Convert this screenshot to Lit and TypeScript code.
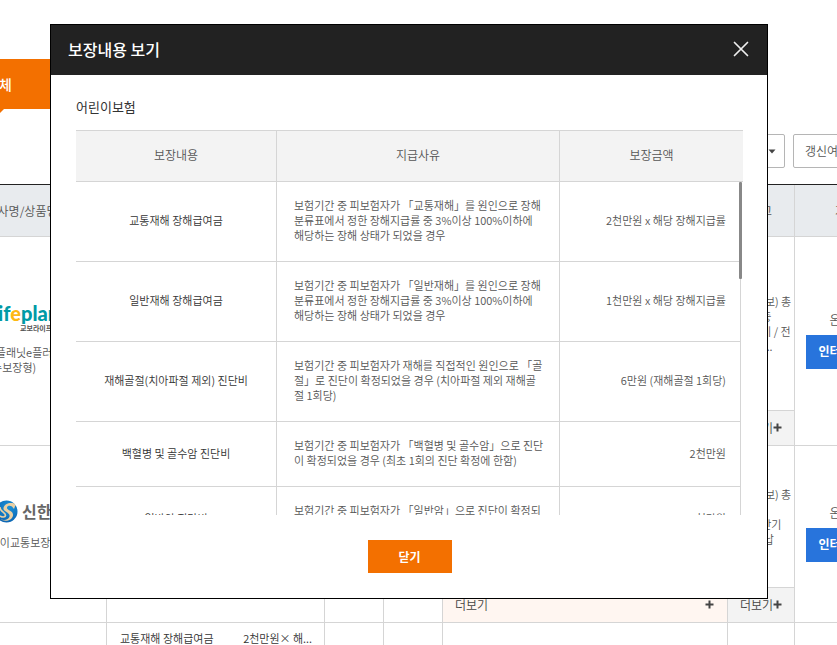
import { LitElement, html, css, svg } from "lit";
import { customElement, property } from "lit/decorators.js";

const base = css`
  *, *::before, *::after { box-sizing: border-box; }
  button, select { font: inherit; margin: 0; }
  h2, h3, p { margin: 0; }
  table { border-collapse: separate; border-spacing: 0; table-layout: fixed; width: 100%; }
  th, td { padding: 0; font-weight: inherit; }
`;

const plus = html`<svg class="plus" width="9" height="9" viewBox="0 0 9 9" aria-hidden="true">
  <path d="M4.5 0.5V8.5M0.5 4.5H8.5" stroke="#444" stroke-width="2" fill="none" />
</svg>`;

const lines = (rows: string[]) => rows.map((r, i) => (i ? html`<br />${r}` : r));

interface Benefit { name: string; reason: string[]; amount: string; }

const BENEFITS: Benefit[] = [
  {
    name: "교통재해 장해급여금",
    reason: ["보험기간 중 피보험자가 「교통재해」를 원인으로 장해", "분류표에서 정한 장해지급률 중 3%이상 100%이하에", "해당하는 장해 상태가 되었을 경우"],
    amount: "2천만원 x 해당 장해지급률",
  },
  {
    name: "일반재해 장해급여금",
    reason: ["보험기간 중 피보험자가 「일반재해」를 원인으로 장해", "분류표에서 정한 장해지급률 중 3%이상 100%이하에", "해당하는 장해 상태가 되었을 경우"],
    amount: "1천만원 x 해당 장해지급률",
  },
  {
    name: "재해골절(치아파절 제외) 진단비",
    reason: ["보험기간 중 피보험자가 재해를 직접적인 원인으로 「골", "절」로 진단이 확정되었을 경우 (치아파절 제외 재해골", "절 1회당)"],
    amount: "6만원 (재해골절 1회당)",
  },
  {
    name: "백혈병 및 골수암 진단비",
    reason: ["보험기간 중 피보험자가 「백혈병 및 골수암」으로 진단", "이 확정되었을 경우 (최초 1회의 진단 확정에 한함)"],
    amount: "2천만원",
  },
  {
    name: "일반암 진단비",
    reason: ["보험기간 중 피보험자가 「일반암」으로 진단이 확정되", "었을 경우 (최초 1회한)"],
    amount: "1천만원",
  },
];

@customElement("benefit-dialog")
export class BenefitDialog extends LitElement {
  static styles = [base, css`
    :host { display: block; background: #fff; border: 1px solid #000; }
    .bar { display: flex; align-items: center; justify-content: space-between; height: 50px; padding: 0 17px 2px; background: #222; color: #fff; }
    .title { font-size: 16px; line-height: 24px; font-weight: 500; }
    .close { display: flex; padding: 0; border: 0; background: none; cursor: pointer; }
    .content { padding: 22px 24px 25px 25px; }
    .product { margin-bottom: 13px; font-size: 13px; line-height: 20px; font-weight: 400; color: #333; }
    .name { width: 201px; }
    .reason { width: 283px; }
    .head th { height: 52px; padding-bottom: 3px; background: #f3f3f3; border: solid #d5d5d5; border-width: 1px 1px 1px 0; color: #555; }
    .head th:last-child { border-right: 0; }
    .scroller { position: relative; height: 333px; padding-right: 2px; overflow: hidden; }
    .list td { padding: 16px 8px 18px 17px; font-size: 11px; line-height: 15px; border: solid #d5d5d5; border-width: 0 1px 1px 0; color: #555; white-space: nowrap; }
    .list td.name { padding: 16px 0 18px; text-align: center; color: #333; }
    .list td.amount { padding: 16px 14px 18px 0; text-align: right; }
    .thumb { position: absolute; top: 0; right: 1px; width: 3px; height: 97px; border-radius: 1px; background: #888; }
    .confirm { display: block; width: 84px; height: 33px; margin: 25px auto 0; padding: 0; border: 0; background: #f37000; color: #fff; font-weight: 700; cursor: pointer; }
  `];

  render() {
    const cols = html`<colgroup><col class="name" /><col class="reason" /><col /></colgroup>`;
    return html`
      <header class="bar">
        <h2 class="title">보장내용 보기</h2>
        <button class="close" type="button" aria-label="닫기">
          <svg width="18" height="18" viewBox="0 0 18 18"><path d="M2.5 2.5L15.5 15.5M15.5 2.5L2.5 15.5" stroke="#eee" stroke-width="1.7" stroke-linecap="round" /></svg>
        </button>
      </header>
      <div class="content">
        <h3 class="product">어린이보험</h3>
        <table class="head">
          ${cols}
          <thead><tr><th scope="col">보장내용</th><th scope="col">지급사유</th><th scope="col">보장금액</th></tr></thead>
        </table>
        <div class="scroller">
          <table class="list" aria-label="어린이보험 보장내용">
            ${cols}
            <tbody>
              ${BENEFITS.map((b) => html`<tr><td class="name">${b.name}</td><td>${lines(b.reason)}</td><td class="amount">${b.amount}</td></tr>`)}
            </tbody>
          </table>
          <span class="thumb"></span>
        </div>
        <button class="confirm" type="button">닫기</button>
      </div>`;
  }
}

@customElement("filter-select")
export class FilterSelect extends LitElement {
  @property() label = "";
  static styles = [base, css`
    :host { display: grid; width: 105px; height: 34px; }
    select, .arrow { grid-area: 1 / 1; }
    select { appearance: none; width: 100%; height: 100%; padding: 0 24px 2px 11px; border: 1px solid #b5b5b5; border-radius: 2px; background: #fff; color: #555; }
    .arrow { place-self: center end; margin-right: 9px; pointer-events: none; }
  `];
  render() {
    return html`<select aria-label=${this.label}><option>${this.label}</option></select>
      <svg class="arrow" width="8" height="5" viewBox="0 0 8 5"><path d="M0.5 0.5H7.5L4 4.5Z" fill="#444" /></svg>`;
  }
}

const lifeplanet = html`
  <div class="lifeplanet"><span class="word">lif<span class="accent">e</span>planet</span><span class="caption">교보라이프플래닛</span></div>`;

const shinhan = html`
  <div class="shinhan">
    <svg width="23" height="23" viewBox="0 0 23 23" aria-hidden="true">
      <defs><radialGradient id="globe" cx="0.6" cy="0.3" r="0.8">
        ${svg`<stop offset="0" stop-color="#1c93d8" /><stop offset="1" stop-color="#0a5fae" />`}
      </radialGradient></defs>
      <circle cx="11.5" cy="11.5" r="11" fill="url(#globe)" />
      <path d="M19 3.5C15 2 9 4 8.500 8C8 12 15.500 12 14.500 16.500C13.800 19.500 9 21 5.500 19C8.500 21.800 17 21.500 18 15.500C18.800 10.500 11.500 10.500 12 7.500C12.300 5.500 15 5.200 17 6.500L19 9L20.500 5Z" fill="#ead0a4" />
      <path d="M5 7C4.500 11.500 11 12.500 10.500 15.500C10.200 17.300 7.500 17.500 5 16" stroke="#ead0a4" stroke-width="1.600" fill="none" />
    </svg>
    <span class="mark">신한라이프</span>
  </div>`;

@customElement("app-root")
export class AppRoot extends LitElement {
  static styles = [base, css`
    :host { display: block; position: relative; height: 100vh; overflow: hidden; background: #fff; color: #555; font: 350 12px/15px "Noto Sans CJK KR", "Noto Sans", sans-serif; }
    .page { min-width: 960px; margin-left: -62px; padding-top: 59px; }
    .tabs { display: flex; }
    .tab { position: relative; width: 122px; height: 50px; padding: 0; border: 0; background: #f37000; color: #fff; font-size: 14px; font-weight: 500; }
    .tab::after { content: ""; position: absolute; top: 100%; left: 50%; margin-left: -5px; border: solid transparent; border-width: 5px 5px 0; border-top-color: #f37000; }
    .filters { display: flex; justify-content: flex-end; gap: 8px; margin: 25px 0 16px; }
    .products { width: 960px; border-top: 1px solid #222; }
    .products th { height: 52px; background: #e8ebee; }
    .products th, .products td { border: solid #d5d5d5; border-width: 0 1px 1px 0; }
    .c1 { width: 169px; } .c2 { width: 218px; } .c3 { width: 59px; } .c5 { width: 285px; } .c6 { width: 67px; } .c7 { width: 103px; }
    .cell { display: flex; flex-direction: column; justify-content: center; min-height: 208px; }
    .short .cell { min-height: 176px; }
    .company { gap: 12px; padding: 0 0 4px 10px; font-size: 11px; white-space: nowrap; }
    .note { flex: 1; display: flex; align-items: center; padding-left: 13px; font-size: 11px; white-space: nowrap; }
    .more { display: flex; align-items: center; justify-content: space-between; width: 100%; height: 35px; padding: 0 13px 2px 12px; border: 0; border-top: 1px solid #d5d5d5; background: #f3f3f3; color: #444; text-align: left; white-space: nowrap; }
    .more.wide { background: #fff6f1; }
    .plus { flex: none; }
    .apply { align-items: center; gap: 8px; padding-bottom: 2px; }
    .join { width: 80px; height: 34px; padding: 0 0 2px; border: 0; background: #2874dc; color: #fff; font-weight: 700; }
    .summary { display: flex; justify-content: space-between; padding: 8px 12px 24px 13px; font-size: 11px; color: #333; white-space: nowrap; }
    .lifeplanet { display: flex; flex-direction: column; width: 130px; padding-left: 45px; }
    .word { font: 900 20px/20px Lato, sans-serif; color: #009aa6; }
    .accent { color: #fdb913; }
    .caption { padding-left: 27px; font-size: 7px; line-height: 10px; font-weight: 700; color: #555; white-space: nowrap; }
    .shinhan { display: flex; align-items: center; gap: 4px; padding-left: 47px; white-space: nowrap; }
    .mark { font-size: 16px; line-height: 20px; font-weight: 700; color: #666; }
    .dialog { position: absolute; top: 24px; left: 50px; right: 69px; }
  `];

  private row(short: boolean, logo: unknown, name: string[], note: string[]) {
    return html`<tr class=${short ? "short" : ""}>
      <td><div class="cell company">${logo}<p>${lines(name)}</p></div></td>
      <td></td><td></td><td></td>
      <td><div class="cell"><div class="note"></div><button class="more wide" type="button">더보기${plus}</button></div></td>
      <td><div class="cell"><p class="note"><span>${lines(note)}</span></p><button class="more" type="button">더보기${plus}</button></div></td>
      <td><div class="cell apply"><span>온라인</span><button class="join" type="button">인터넷가입</button></div></td>
    </tr>`;
  }

  render() {
    return html`
      <main class="page">
        <nav class="tabs"><button class="tab" type="button">전체</button></nav>
        <div class="filters"><filter-select label="보험기간"></filter-select><filter-select label="갱신여부"></filter-select></div>
        <table class="products">
          <colgroup><col class="c1" /><col class="c2" /><col class="c3" /><col class="c3" /><col class="c5" /><col class="c6" /><col class="c7" /></colgroup>
          <thead><tr><th>회사명/상품명</th><th></th><th></th><th></th><th></th><th>비고</th><th>가입</th></tr></thead>
          <tbody>
            ${this.row(false, lifeplanet, ["(무)라이프플래닛e플러스", "이보험(순수보장형)"], ["손(생보) 총", "보험종", "월만기 / 전", "납입 ..."])}
            ${this.row(true, shinhan, ["신한 M어린이교통보장", "보험"], ["손(생보) 총", "보험 :", "월납만기", "전기 납"])}
            <tr><td></td><td><div class="summary"><span>교통재해 장해급여금</span><span>2천만원× 해...</span></div></td><td></td><td></td><td></td><td></td><td></td></tr>
          </tbody>
        </table>
      </main>
      <benefit-dialog class="dialog" role="dialog" aria-modal="true" aria-label="보장내용 보기"></benefit-dialog>`;
  }
}
